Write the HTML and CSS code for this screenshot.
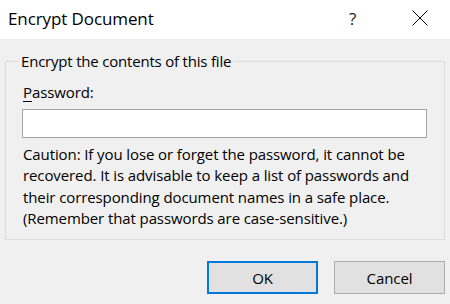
FILE: index.html
```html
<!DOCTYPE html>
<html>
<head>
<meta charset="utf-8">
<link rel="stylesheet" href="styles.css">
</head>
<body>
<div class="dialog">
  <div class="titlebar">
    <div class="title">Encrypt Document</div>
    <div class="help">?</div>
    <div class="close">
      <svg width="16" height="16" viewBox="0 0 16 16"><path d="M0.5 0.5 L15.5 15.5 M15.5 0.5 L0.5 15.5" stroke="#000" stroke-width="1" fill="none"/></svg>
    </div>
  </div>
  <div class="body">
    <fieldset class="group">
      <legend class="legend">Encrypt the contents of this file</legend>
      <div class="label"><span class="u">P</span>assword:</div>
      <div class="input"></div>
      <p class="caution">Caution: If you lose or forget the password, it cannot be<br>recovered. It is advisable to keep a list of passwords and<br>their corresponding document names in a safe place.<br>(Remember that passwords are case-sensitive.)</p>
    </fieldset>
    <div class="buttons">
      <div class="btn btn-default">OK</div>
      <div class="btn">Cancel</div>
    </div>
  </div>
</div>
</body>
</html>
```
FILE: styles.css
```css
html, body {
  margin: 0;
  padding: 0;
}
body {
  width: 450px;
  height: 304px;
  overflow: hidden;
  background: #f0f0f0;
  font-family: "Open Sans", "Noto Sans", sans-serif;
  color: #000;
}
.dialog {
  display: flex;
  flex-direction: column;
  height: 304px;
}
.titlebar {
  height: 39px;
  background: #fff;
  display: flex;
  align-items: center;
}
.title {
  flex: 1;
  padding-left: 8px;
  font-size: 17px;
  letter-spacing: -0.1px;
  padding-bottom: 2px;
}
.help {
  width: 12px;
  font-size: 17px;
  color: #222;
  margin-right: 51px;
  padding-bottom: 2px;
}
.close {
  width: 16px;
  height: 16px;
  margin-right: 22px;
  margin-top: -3px;
}
.close svg { display: block; }
.body {
  flex: 1;
  padding: 12px 5px 0 5px;
  font-size: 15px;
  letter-spacing: -0.1px;
}
.group {
  margin: 0;
  border: 1px solid #dcdcdc;
  padding: 0 16px 0 16px;
  height: 189px;
  box-sizing: border-box;
}
.legend {
  padding: 0 3px;
  margin-left: -4px;
  line-height: 20px;
  letter-spacing: -0.2px;
}
.label {
  margin-top: 11px;
  line-height: 20px;
  padding-left: 1px;
}
.u { text-decoration: underline; text-underline-offset: 3px; }
.input {
  margin-top: 7px;
  height: 27px;
  border: 1px solid #a5a5a5;
  background: #fff;
  width: 403px;
}
.caution {
  margin: 6px 0 0 1px;
  line-height: 21.3px;
}
.buttons {
  display: flex;
  justify-content: flex-end;
  gap: 16px;
  margin-top: 21px;
}
.btn {
  width: 109px;
  height: 31px;
  border: 1px solid #adadad;
  background: #e1e1e1;
  display: flex;
  align-items: center;
  justify-content: center;
  font-size: 15px;
}
.btn-default {
  border: 2px solid #0078d7;
  width: 107px;
  height: 29px;
}
```
